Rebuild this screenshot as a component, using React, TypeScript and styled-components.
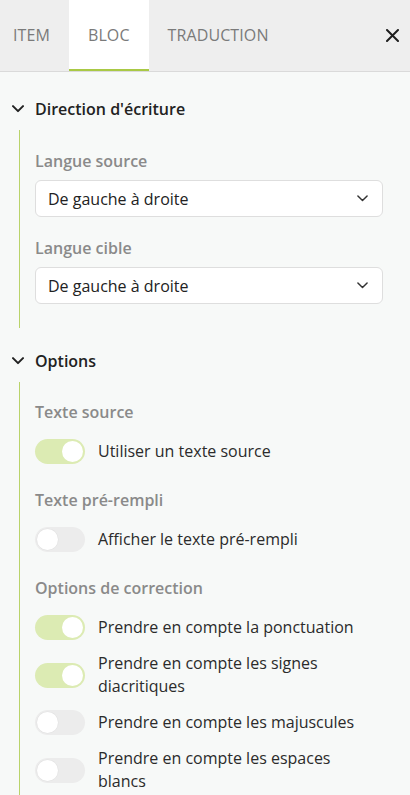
import * as React from "react";
import styled, {createGlobalStyle} from "styled-components";

const GlobalStyle = createGlobalStyle`
  html, body {
    margin: 0;
    padding: 0;
    background: #f7f9f8;
  }
  body {
    font-family: "Open Sans", "Noto Sans", sans-serif;
    color: #2b2b2b;
  }
  * { box-sizing: border-box; }
`;

const GREEN = "#a9c945";

const Panel = styled.div`
  width: 410px;
  min-height: 795px;
  background: #f7f9f8;
  overflow: hidden;
`;

const Header = styled.header`
  display: flex;
  align-items: stretch;
  height: 72px;
  background: #eeeeee;
  border-bottom: 1px solid #dadada;
`;

const Tabs = styled.nav`
  display: flex;
  flex: 1;
`;

const Tab = styled.div<{ active?: boolean }>`
  display: flex;
  align-items: center;
  padding: 0 19px;
  font-size: 16px;
  letter-spacing: 0.1px;
  color: #7a7a7a;
  text-transform: uppercase;
  background: ${({active}) => active ? "#ffffff" : "transparent"};
  border-bottom: 2px solid ${({active}) => active ? GREEN : "transparent"};
  cursor: pointer;

  &:first-child {
    padding-left: 13px;
  }
`;

const CloseButton = styled.button`
  display: flex;
  align-items: center;
  justify-content: flex-end;
  width: 44px;
  padding: 0 11px 1px 0;
  border: none;
  background: none;
  cursor: pointer;
`;

const Content = styled.main`
  display: flex;
  flex-direction: column;
  gap: 20px;
  padding: 24px 27px 0 0;
`;

const Section = styled.section`
  display: flex;
  flex-direction: column;
  gap: 8px;
`;

const SectionTitle = styled.div`
  display: flex;
  align-items: center;
  gap: 11px;
  height: 26px;
  padding-left: 12px;
  font-size: 16px;
  font-weight: 600;
  color: #222;
`;

const SectionBody = styled.div<{ last?: boolean }>`
  display: flex;
  flex-direction: column;
  gap: ${({last}) => last ? "25px" : "20px"};
  margin-left: 19px;
  padding: ${({last}) => last ? "19px 0 20px 15px" : "20px 0 24px 15px"};
  border-left: 1px solid #b9d36a;
`;

const Field = styled.div<{ tight?: boolean }>`
  display: flex;
  flex-direction: column;
  gap: ${({tight}) => tight ? "8px" : "16px"};
`;

const FieldLabel = styled.div`
  font-size: 16px;
  line-height: 22px;
  font-weight: 600;
  color: #8a8a8a;
`;

const Select = styled.div`
  display: flex;
  align-items: center;
  justify-content: space-between;
  height: 37px;
  padding: 0 14px 0 12px;
  background: #fff;
  border: 1px solid #dedede;
  border-radius: 6px;
  font-size: 16px;
  color: #222;
`;

const ToggleList = styled.div`
  display: flex;
  flex-direction: column;
  gap: 12px;
`;

const ToggleRow = styled.label`
  display: flex;
  align-items: center;
  gap: 13px;
  padding-right: 10px;
  font-size: 16px;
  line-height: 23px;
  color: #2b2b2b;
`;

const Track = styled.span<{ on?: boolean }>`
  position: relative;
  flex: 0 0 50px;
  height: 25px;
  border-radius: 13px;
  background: ${({on}) => on ? "#dcebb3" : "#ececec"};
`;

const Knob = styled.span<{ on?: boolean }>`
  position: absolute;
  top: 2px;
  left: ${({on}) => on ? "27px" : "2px"};
  width: 21px;
  height: 21px;
  border-radius: 50%;
  background: #fff;
  box-shadow: ${({on}) => on ? "none" : "0 0 0 0.5px #e2e2e2"};
`;

const Chevron = ({size = 12, stroke = 2, color = "#222"}: { size?: number; stroke?: number; color?: string }) => (
    <svg width={size} height={size * 0.6} viewBox="0 0 12 7" fill="none">
        <path d="M1 1l5 5 5-5" stroke={color} strokeWidth={stroke} strokeLinecap="round" strokeLinejoin="round"/>
    </svg>
);

const Toggle = ({on, label}: { on?: boolean; label: string }) => (
    <ToggleRow>
        <Track on={on}><Knob on={on}/></Track>
        <span>{label}</span>
    </ToggleRow>
);

export default function App() {
    return (
        <Panel>
            <GlobalStyle/>
            <Header>
                <Tabs>
                    <Tab>Item</Tab>
                    <Tab active>Bloc</Tab>
                    <Tab>Traduction</Tab>
                </Tabs>
                <CloseButton aria-label="Fermer">
                    <svg width="13" height="13" viewBox="0 0 13 13">
                        <path d="M1 1l11 11M12 1L1 12" stroke="#1e1e1e" strokeWidth="2" strokeLinecap="round"/>
                    </svg>
                </CloseButton>
            </Header>
            <Content>
                <Section>
                    <SectionTitle>
                        <Chevron/>
                        Direction d'écriture
                    </SectionTitle>
                    <SectionBody>
                        <Field tight>
                            <FieldLabel>Langue source</FieldLabel>
                            <Select>
                                De gauche à droite
                                <Chevron size={11} stroke={1.6} color="#333"/>
                            </Select>
                        </Field>
                        <Field tight>
                            <FieldLabel>Langue cible</FieldLabel>
                            <Select>
                                De gauche à droite
                                <Chevron size={11} stroke={1.6} color="#333"/>
                            </Select>
                        </Field>
                    </SectionBody>
                </Section>
                <Section>
                    <SectionTitle>
                        <Chevron/>
                        Options
                    </SectionTitle>
                    <SectionBody last>
                        <Field>
                            <FieldLabel>Texte source</FieldLabel>
                            <ToggleList>
                                <Toggle on label="Utiliser un texte source"/>
                            </ToggleList>
                        </Field>
                        <Field>
                            <FieldLabel>Texte pré-rempli</FieldLabel>
                            <ToggleList>
                                <Toggle label="Afficher le texte pré-rempli"/>
                            </ToggleList>
                        </Field>
                        <Field>
                            <FieldLabel>Options de correction</FieldLabel>
                            <ToggleList>
                                <Toggle on label="Prendre en compte la ponctuation"/>
                                <Toggle on label="Prendre en compte les signes diacritiques"/>
                                <Toggle label="Prendre en compte les majuscules"/>
                                <Toggle label="Prendre en compte les espaces blancs"/>
                            </ToggleList>
                        </Field>
                    </SectionBody>
                </Section>
            </Content>
        </Panel>
    );
}
